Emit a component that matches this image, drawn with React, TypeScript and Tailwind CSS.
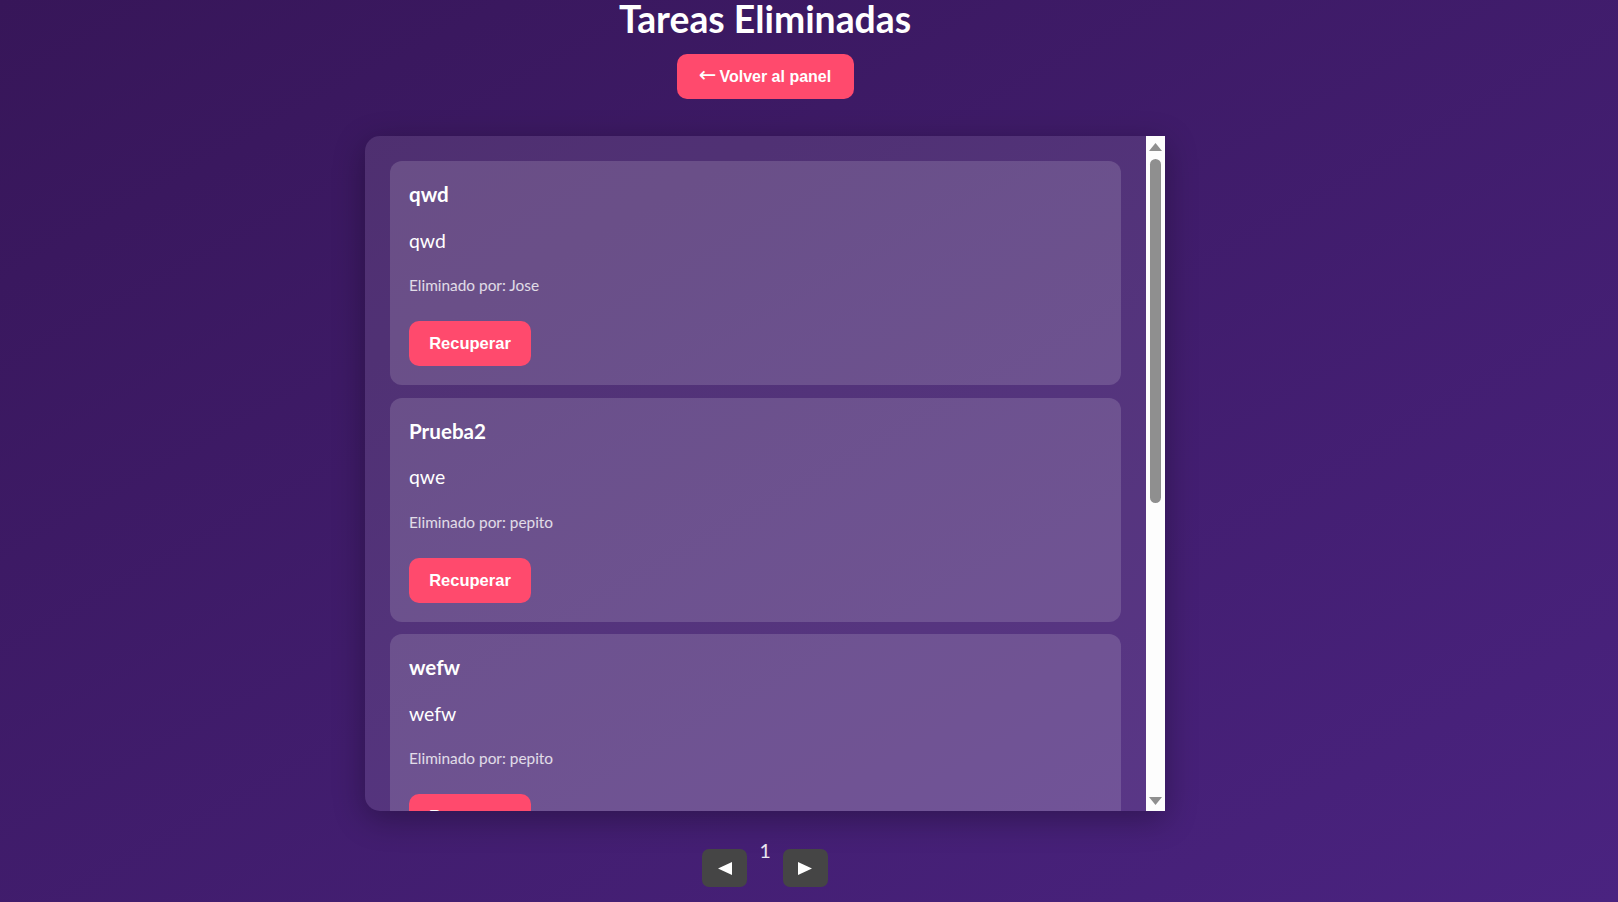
import React from "react";

type Task = { title: string; desc: string; by: string };

const tasks: Task[] = [
  { title: "qwd", desc: "qwd", by: "Jose" },
  { title: "Prueba2", desc: "qwe", by: "pepito" },
  { title: "wefw", desc: "wefw", by: "pepito" },
];

function Card({ t }: { t: Task }) {
  return (
    <div className="shrink-0 h-[224px] rounded-[12px] bg-white/15 px-[19px] pt-[19px] pb-[19px] flex flex-col">
      <h3 className="font-['Lato',sans-serif] font-bold text-[20.6px] leading-[28px] text-white">{t.title}</h3>
      <p className="mt-[19.5px] font-['Lato',sans-serif] text-[19.4px] leading-[26px] text-white">{t.desc}</p>
      <p className="mt-[21.5px] font-['Lato',sans-serif] text-[15.4px] leading-[20px] text-white/80">
        Eliminado por: {t.by}
      </p>
      <button className="mt-[26px] w-[122px] h-[45px] shrink-0 rounded-[10px] bg-[#ff4a6d] text-white font-['Liberation_Sans',Arial,sans-serif] font-bold text-[16.5px] flex items-center justify-center">
        Recuperar
      </button>
    </div>
  );
}

function FakeScrollbar() {
  return (
    <div className="w-[19px] shrink-0 bg-[#fdfdfd] flex flex-col items-center pt-[7px] pb-[6px]">
      <svg width="13" height="8" viewBox="0 0 13 8">
        <polygon points="6.5,0 13,8 0,8" fill="#8f8f8f" />
      </svg>
      <div className="mt-[8px] w-[11px] h-[344px] rounded-full bg-[#8f8f8f]" />
      <div className="flex-1" />
      <svg width="13" height="8" viewBox="0 0 13 8">
        <polygon points="0,0 13,0 6.5,8" fill="#8f8f8f" />
      </svg>
    </div>
  );
}

export default function App() {
  return (
    <div className="w-full h-[902px] overflow-hidden bg-gradient-to-br from-[#371659] to-[#4a2380] flex flex-col items-center pr-[88px]">
      <h1 className="font-['Lato',sans-serif] font-bold text-[37.3px] leading-[38px] text-white">Tareas Eliminadas</h1>
      <button className="mt-[16px] w-[177px] h-[45px] rounded-[10px] bg-[#ff4a6d] text-white font-['Liberation_Sans',Arial,sans-serif] font-bold text-[16px] flex items-center justify-center gap-[3px]">
        <span className="font-['DejaVu_Sans',sans-serif] font-normal text-[21px] leading-none -mt-[2px]">←</span>
        <span>Volver al panel</span>
      </button>

      <div className="mt-[37px] w-[800px] h-[675px] flex rounded-l-[15px] bg-white/10 shadow-[0_8px_32px_rgba(0,0,0,0.3)] overflow-hidden">
        <div className="flex-1 overflow-hidden p-[25px] flex flex-col gap-[12.5px]">
          {tasks.map((t, i) => (
            <Card key={i} t={t} />
          ))}
        </div>
        <FakeScrollbar />
      </div>

      <div className="mt-[26.5px] flex items-start">
        <button className="mt-[11.5px] w-[45px] h-[38px] rounded-[7px] bg-[#454545] flex items-center justify-center">
          <svg width="14" height="13" viewBox="0 0 14 13">
            <polygon points="0,6.5 14,0 14,13" fill="#ffffff" />
          </svg>
        </button>
        <span className="mx-[12px] font-['Lato',sans-serif] text-[19.4px] leading-[26px] text-white/90">1</span>
        <button className="mt-[11.5px] w-[45px] h-[38px] rounded-[7px] bg-[#454545] flex items-center justify-center">
          <svg width="14" height="13" viewBox="0 0 14 13">
            <polygon points="0,0 14,6.5 0,13" fill="#ffffff" />
          </svg>
        </button>
      </div>
    </div>
  );
}
